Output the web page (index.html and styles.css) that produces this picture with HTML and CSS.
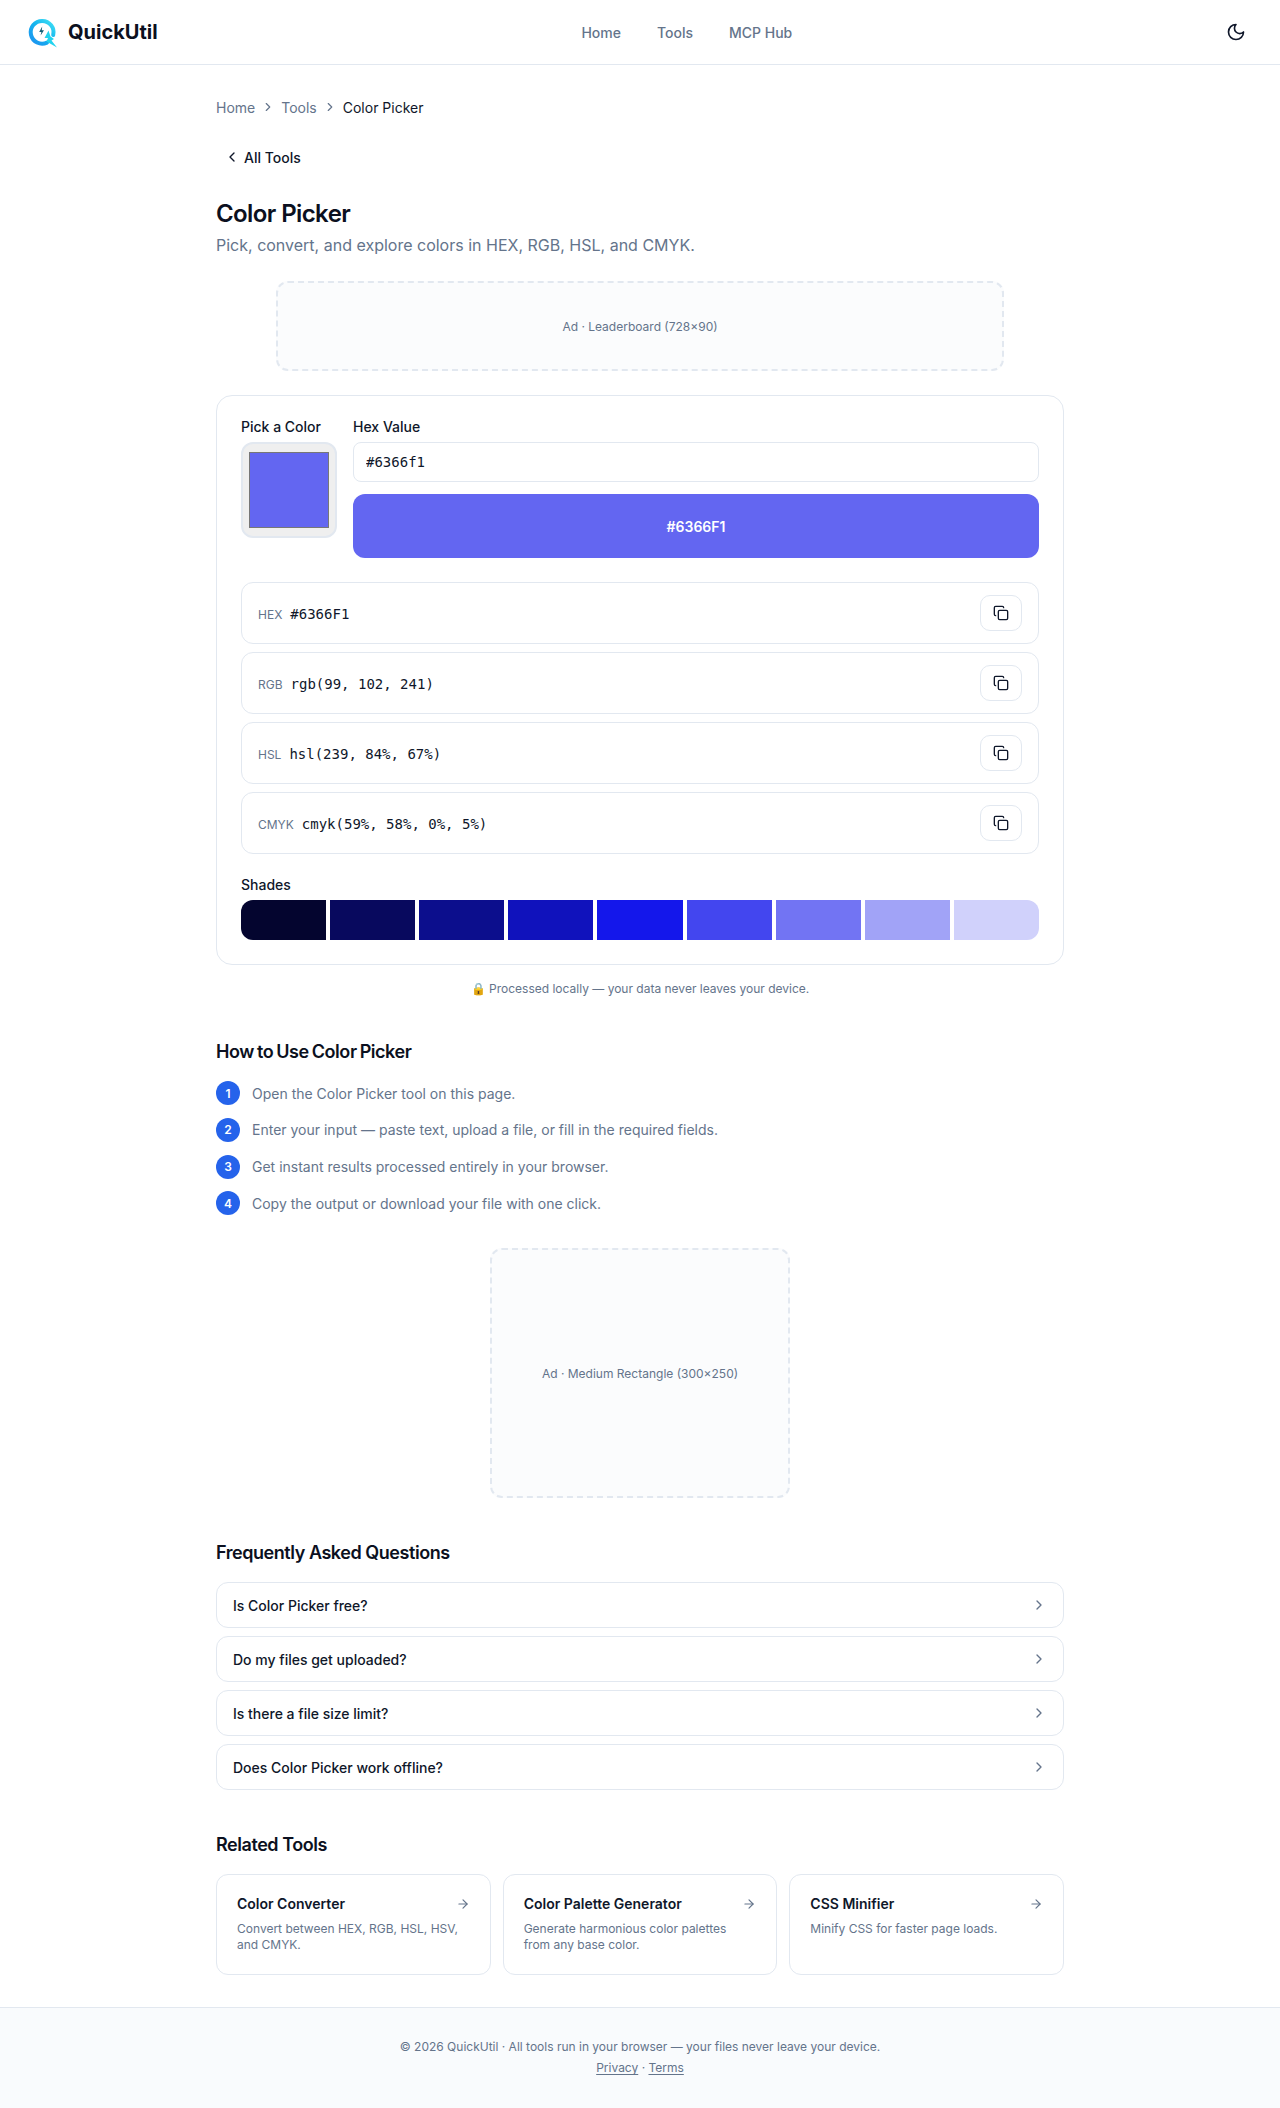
FILE: index.html
```html
<!DOCTYPE html>
<html lang="en">
<head>
  <meta charset="UTF-8" />
  <meta name="viewport" content="width=device-width, initial-scale=1.0" />
  <title>Color Picker - QuickUtil</title>
  <link rel="stylesheet" href="styles.css">
</head>
<body>
  <header class="site-header">
    <a class="logo" href="#">
      <svg class="logo-mark" width="36" height="36" viewBox="0 0 36 36" fill="none">
        <defs>
          <linearGradient id="ringGrad" x1="6" y1="30" x2="28" y2="6" gradientUnits="userSpaceOnUse">
            <stop offset="0" stop-color="#1e90f0"/>
            <stop offset="0.55" stop-color="#14b4ee"/>
            <stop offset="1" stop-color="#3fe0f5"/>
          </linearGradient>
        </defs>
        <path d="M23 28.6A11.4 11.4 0 1 1 29.2 21" stroke="url(#ringGrad)" stroke-width="4" stroke-linecap="round"/>
        <path d="M24.5 16.5 L20.5 24 L24 24 L22.5 27.5 L33 33.5 L27.5 26.5 L30 25 L26.5 22.5 Z" fill="#22d3ee"/>
        <path d="M18.2 12.5 L15.2 18 L17.4 18 L16.6 21.5 L20 16.2 L17.8 16.2 Z" fill="#155e75"/>
      </svg>
      <span>QuickUtil</span>
    </a>
    <nav class="main-nav">
      <a href="#">Home</a>
      <a href="#">Tools</a>
      <a href="#">MCP Hub</a>
    </nav>
    <button class="theme-btn" aria-label="Toggle theme">
      <svg width="20" height="20" viewBox="0 0 24 24" fill="none" stroke="currentColor" stroke-width="2" stroke-linecap="round" stroke-linejoin="round"><path d="M12 3a6 6 0 0 0 9 9 9 9 0 1 1-9-9Z"/></svg>
    </button>
  </header>

  <main class="container">
    <div class="breadcrumb">
      <a href="#">Home</a>
      <svg width="14" height="14" viewBox="0 0 24 24" fill="none" stroke="currentColor" stroke-width="2" stroke-linecap="round" stroke-linejoin="round"><path d="m9 18 6-6-6-6"/></svg>
      <a href="#">Tools</a>
      <svg width="14" height="14" viewBox="0 0 24 24" fill="none" stroke="currentColor" stroke-width="2" stroke-linecap="round" stroke-linejoin="round"><path d="m9 18 6-6-6-6"/></svg>
      <span class="current">Color Picker</span>
    </div>

    <a class="back-link" href="#">
      <svg width="16" height="16" viewBox="0 0 24 24" fill="none" stroke="currentColor" stroke-width="2" stroke-linecap="round" stroke-linejoin="round"><path d="m15 18-6-6 6-6"/></svg>
      All Tools
    </a>

    <h1>Color Picker</h1>
    <p class="subtitle">Pick, convert, and explore colors in HEX, RGB, HSL, and CMYK.</p>

    <div class="ad ad-leaderboard">Ad · Leaderboard (728×90)</div>

    <section class="card">
      <div class="picker-top">
        <div>
          <label class="field-label" for="colorInput">Pick a Color</label>
          <input class="color-input" type="color" id="colorInput" value="#6366f1" />
        </div>
        <div class="hex-col">
          <label class="field-label" for="hexInput">Hex Value</label>
          <input class="hex-input" type="text" id="hexInput" value="#6366f1" />
          <div class="preview">#6366F1</div>
        </div>
      </div>

      <div class="value-rows">
        <div class="value-row">
          <div><span class="value-label">HEX</span><code>#6366F1</code></div>
          <button class="copy-btn" aria-label="Copy"><svg width="16" height="16" viewBox="0 0 24 24" fill="none" stroke="currentColor" stroke-width="2" stroke-linecap="round" stroke-linejoin="round"><rect width="14" height="14" x="8" y="8" rx="2" ry="2"/><path d="M4 16c-1.1 0-2-.9-2-2V4c0-1.1.9-2 2-2h10c1.1 0 2 .9 2 2"/></svg></button>
        </div>
        <div class="value-row">
          <div><span class="value-label">RGB</span><code>rgb(99, 102, 241)</code></div>
          <button class="copy-btn" aria-label="Copy"><svg width="16" height="16" viewBox="0 0 24 24" fill="none" stroke="currentColor" stroke-width="2" stroke-linecap="round" stroke-linejoin="round"><rect width="14" height="14" x="8" y="8" rx="2" ry="2"/><path d="M4 16c-1.1 0-2-.9-2-2V4c0-1.1.9-2 2-2h10c1.1 0 2 .9 2 2"/></svg></button>
        </div>
        <div class="value-row">
          <div><span class="value-label">HSL</span><code>hsl(239, 84%, 67%)</code></div>
          <button class="copy-btn" aria-label="Copy"><svg width="16" height="16" viewBox="0 0 24 24" fill="none" stroke="currentColor" stroke-width="2" stroke-linecap="round" stroke-linejoin="round"><rect width="14" height="14" x="8" y="8" rx="2" ry="2"/><path d="M4 16c-1.1 0-2-.9-2-2V4c0-1.1.9-2 2-2h10c1.1 0 2 .9 2 2"/></svg></button>
        </div>
        <div class="value-row">
          <div><span class="value-label">CMYK</span><code>cmyk(59%, 58%, 0%, 5%)</code></div>
          <button class="copy-btn" aria-label="Copy"><svg width="16" height="16" viewBox="0 0 24 24" fill="none" stroke="currentColor" stroke-width="2" stroke-linecap="round" stroke-linejoin="round"><rect width="14" height="14" x="8" y="8" rx="2" ry="2"/><path d="M4 16c-1.1 0-2-.9-2-2V4c0-1.1.9-2 2-2h10c1.1 0 2 .9 2 2"/></svg></button>
        </div>
      </div>

      <div class="field-label">Shades</div>
      <div class="shades">
        <div class="shade shade-1"></div>
        <div class="shade shade-2"></div>
        <div class="shade shade-3"></div>
        <div class="shade shade-4"></div>
        <div class="shade shade-5"></div>
        <div class="shade shade-6"></div>
        <div class="shade shade-7"></div>
        <div class="shade shade-8"></div>
        <div class="shade shade-9"></div>
      </div>
    </section>

    <p class="local-note">🔒 Processed locally — your data never leaves your device.</p>

    <h2 class="how-title">How to Use Color Picker</h2>
    <ol class="steps">
      <li><span class="step-num">1</span>Open the Color Picker tool on this page.</li>
      <li><span class="step-num">2</span>Enter your input — paste text, upload a file, or fill in the required fields.</li>
      <li><span class="step-num">3</span>Get instant results processed entirely in your browser.</li>
      <li><span class="step-num">4</span>Copy the output or download your file with one click.</li>
    </ol>

    <div class="ad ad-rectangle">Ad · Medium Rectangle (300×250)</div>

    <h2 class="faq-title">Frequently Asked Questions</h2>
    <div class="faq-list">
      <div class="faq-row">Is Color Picker free?<svg width="16" height="16" viewBox="0 0 24 24" fill="none" stroke="currentColor" stroke-width="2" stroke-linecap="round" stroke-linejoin="round"><path d="m9 18 6-6-6-6"/></svg></div>
      <div class="faq-row">Do my files get uploaded?<svg width="16" height="16" viewBox="0 0 24 24" fill="none" stroke="currentColor" stroke-width="2" stroke-linecap="round" stroke-linejoin="round"><path d="m9 18 6-6-6-6"/></svg></div>
      <div class="faq-row">Is there a file size limit?<svg width="16" height="16" viewBox="0 0 24 24" fill="none" stroke="currentColor" stroke-width="2" stroke-linecap="round" stroke-linejoin="round"><path d="m9 18 6-6-6-6"/></svg></div>
      <div class="faq-row">Does Color Picker work offline?<svg width="16" height="16" viewBox="0 0 24 24" fill="none" stroke="currentColor" stroke-width="2" stroke-linecap="round" stroke-linejoin="round"><path d="m9 18 6-6-6-6"/></svg></div>
    </div>

    <h2 class="related-title">Related Tools</h2>
    <div class="related-grid">
      <a class="related-card" href="#">
        <div class="related-head">Color Converter<svg width="14" height="14" viewBox="0 0 24 24" fill="none" stroke="currentColor" stroke-width="2" stroke-linecap="round" stroke-linejoin="round"><path d="M5 12h14"/><path d="m12 5 7 7-7 7"/></svg></div>
        <p>Convert between HEX, RGB, HSL, HSV, and CMYK.</p>
      </a>
      <a class="related-card" href="#">
        <div class="related-head">Color Palette Generator<svg width="14" height="14" viewBox="0 0 24 24" fill="none" stroke="currentColor" stroke-width="2" stroke-linecap="round" stroke-linejoin="round"><path d="M5 12h14"/><path d="m12 5 7 7-7 7"/></svg></div>
        <p>Generate harmonious color palettes from any base color.</p>
      </a>
      <a class="related-card" href="#">
        <div class="related-head">CSS Minifier<svg width="14" height="14" viewBox="0 0 24 24" fill="none" stroke="currentColor" stroke-width="2" stroke-linecap="round" stroke-linejoin="round"><path d="M5 12h14"/><path d="m12 5 7 7-7 7"/></svg></div>
        <p>Minify CSS for faster page loads.</p>
      </a>
    </div>
  </main>

  <footer class="site-footer">
    <p>© 2026 QuickUtil · All tools run in your browser — your files never leave your device.</p>
    <p><a href="#">Privacy</a> · <a href="#">Terms</a></p>
  </footer>
</body>
</html>
```

FILE: styles.css
```css
* { box-sizing: border-box; }
body {
  margin: 0;
  font-family: "Inter", "Liberation Sans", sans-serif;
  font-size: 14px;
  color: #0f172a;
  background: #fff;
}
a { color: inherit; text-decoration: none; }
svg { display: block; flex-shrink: 0; }

.site-header {
  height: 65px;
  padding: 0 24px;
  display: flex;
  align-items: center;
  justify-content: space-between;
  border-bottom: 1px solid #e2e8f0;
}
.logo {
  display: flex;
  align-items: center;
  gap: 8px;
  font-size: 20px;
  font-weight: 700;
  color: #0b1020;
}
.main-nav { display: flex; gap: 36px; font-weight: 500; color: #64748b; }
.theme-btn {
  width: 40px;
  height: 40px;
  padding: 0;
  border: none;
  background: none;
  color: #0f172a;
  display: flex;
  align-items: center;
  justify-content: center;
}

.container { width: 848px; margin: 0 auto; padding-top: 32px; }

.breadcrumb {
  display: flex;
  align-items: center;
  gap: 6px;
  height: 20px;
  color: #64748b;
}
.breadcrumb .current { color: #0f172a; }

.back-link {
  display: inline-flex;
  align-items: center;
  gap: 4px;
  height: 36px;
  margin-top: 22px;
  padding: 0 8px;
  font-weight: 500;
}

h1 {
  margin: 23px 0 0;
  font-size: 24px;
  line-height: 32px;
  font-weight: 600;
  letter-spacing: -0.025em;
  color: #0b1020;
}
.subtitle {
  margin: 3px 0 24px;
  font-size: 16px;
  line-height: 24px;
  color: #64748b;
}

.ad {
  margin: 0 auto;
  display: flex;
  align-items: center;
  justify-content: center;
  border: 2px dashed #e2e8f0;
  border-radius: 12px;
  background: #fbfcfd;
  font-size: 12px;
  color: #64748b;
}
.ad-leaderboard { width: 728px; height: 90px; }
.ad-rectangle { width: 300px; height: 250px; margin-top: 33px; }

.card {
  margin-top: 24px;
  padding: 24px;
  border: 1px solid #e2e8f0;
  border-radius: 16px;
  background: #fff;
}
.picker-top { display: flex; gap: 16px; }
.field-label {
  display: block;
  margin-bottom: 8px;
  font-size: 14px;
  line-height: 14px;
  font-weight: 500;
}
.color-input {
  display: block;
  width: 96px;
  height: 96px;
  padding: 4px;
  border: 2px solid #e2e8f0;
  border-radius: 12px;
}
.hex-col { flex: 1; }
.hex-input {
  display: block;
  width: 100%;
  height: 40px;
  padding: 0 12px;
  border: 1px solid #e2e8f0;
  border-radius: 8px;
  font-family: "DejaVu Sans Mono", "Liberation Mono", monospace;
  font-size: 14px;
  color: #0f172a;
}
.preview {
  height: 64px;
  margin-top: 12px;
  display: flex;
  align-items: center;
  justify-content: center;
  border-radius: 12px;
  background: #6366f1;
  color: #fff;
  font-weight: 600;
}

.value-rows {
  margin: 24px 0;
  display: flex;
  flex-direction: column;
  gap: 8px;
}
.value-row {
  height: 62px;
  padding: 0 16px;
  display: flex;
  align-items: center;
  justify-content: space-between;
  border: 1px solid #e2e8f0;
  border-radius: 12px;
}
.value-label { margin-right: 8px; font-size: 12px; color: #64748b; }
code {
  font-family: "DejaVu Sans Mono", "Liberation Mono", monospace;
  font-size: 14px;
}
.copy-btn {
  width: 42px;
  height: 36px;
  padding: 0;
  display: flex;
  align-items: center;
  justify-content: center;
  border: 1px solid #e2e8f0;
  border-radius: 10px;
  background: #fff;
  color: #0f172a;
}

.shades {
  height: 40px;
  display: flex;
  gap: 4px;
  border-radius: 12px;
  overflow: hidden;
}
.shade { flex: 1; }
.shade-1 { background: #04052f; }
.shade-2 { background: #08095e; }
.shade-3 { background: #0c0e8d; }
.shade-4 { background: #1012bc; }
.shade-5 { background: #1417eb; }
.shade-6 { background: #4346ef; }
.shade-7 { background: #7274f3; }
.shade-8 { background: #a1a3f7; }
.shade-9 { background: #d0d1fb; }

.local-note {
  margin: 16px 0 0;
  font-size: 12px;
  line-height: 16px;
  text-align: center;
  color: #64748b;
}

h2 {
  margin: 0;
  font-size: 18px;
  line-height: 28px;
  font-weight: 600;
  letter-spacing: -0.025em;
  color: #0b1020;
}
.how-title { margin-top: 41px; word-spacing: -1px; }
.steps {
  margin: 15px 0 0;
  padding: 0;
  list-style: none;
  display: flex;
  flex-direction: column;
  gap: 12.75px;
  color: #64748b;
}
.steps li { display: flex; align-items: center; gap: 12px; height: 24px; }
.step-num {
  width: 24px;
  height: 24px;
  display: flex;
  align-items: center;
  justify-content: center;
  border-radius: 50%;
  background: #2563eb;
  color: #fff;
  font-size: 12px;
  font-weight: 600;
}

.faq-title { margin-top: 41px; }
.faq-list {
  margin-top: 15px;
  display: flex;
  flex-direction: column;
  gap: 8px;
}
.faq-row {
  height: 46px;
  padding: 0 16px;
  display: flex;
  align-items: center;
  justify-content: space-between;
  border: 1px solid #e2e8f0;
  border-radius: 12px;
  font-weight: 500;
}
.faq-row svg { color: #64748b; }

.related-title { margin-top: 41px; }
.related-grid {
  margin-top: 15px;
  display: grid;
  grid-template-columns: repeat(3, 1fr);
  gap: 12px;
}
.related-card {
  height: 101px;
  padding: 19px 20px 20px;
  border: 1px solid #e2e8f0;
  border-radius: 12px;
}
.related-head {
  display: flex;
  align-items: center;
  justify-content: space-between;
  line-height: 20px;
  font-weight: 600;
}
.related-head svg { color: #64748b; }
.related-card p {
  margin: 7px 0 0;
  padding-right: 8px;
  font-size: 12px;
  line-height: 16px;
  color: #64748b;
}

.site-footer {
  margin-top: 32px;
  height: 101px;
  padding-top: 29px;
  border-top: 1px solid #e2e8f0;
  background: #f9fbfd;
  font-size: 12px;
  line-height: 20px;
  text-align: center;
  color: #64748b;
}
.site-footer p { margin: 0 0 1px; }
.site-footer a { text-decoration: underline; text-underline-offset: 2px; }
```
